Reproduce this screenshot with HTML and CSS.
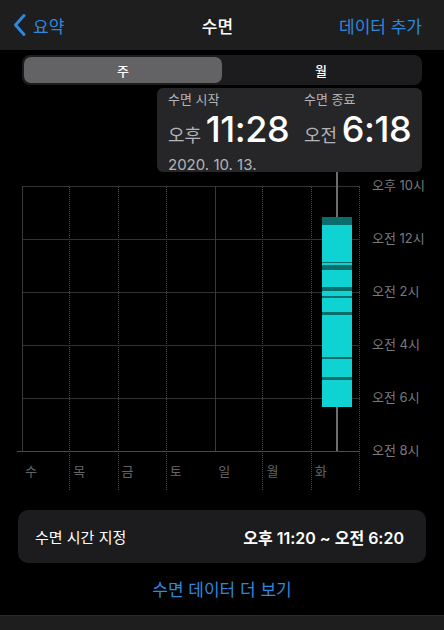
FILE: index.html
```html
<!DOCTYPE html>
<html lang="ko">
<head>
    <meta charset="UTF-8">
    <meta name="viewport" content="width=device-width, initial-scale=1.0">
    <title>수면</title>
    <link rel="stylesheet" href="styles.css">
</head>
<body>
    <header class="navbar">
        <a class="nav-back" href="#">
            <svg width="14" height="24" viewBox="0 0 14 24">
                <path d="M11 2.5 L2.5 12 L11 21.5" fill="none" stroke="currentColor" stroke-width="3" stroke-linecap="round" stroke-linejoin="round"/>
            </svg>
            <span>요약</span>
        </a>
        <div class="nav-title">수면</div>
        <a class="nav-action" href="#">데이터 추가</a>
    </header>

    <div class="segment">
        <div class="segment-item active">주</div>
        <div class="segment-item">월</div>
    </div>

    <div class="tooltip">
        <div class="tip-col">
            <div class="tip-label">수면 시작</div>
            <div class="tip-time"><span class="tip-ampm">오후</span> <span class="tip-big">11:28</span></div>
            <div class="tip-date">2020. 10. 13.</div>
        </div>
        <div class="tip-col">
            <div class="tip-label">수면 종료</div>
            <div class="tip-time"><span class="tip-ampm">오전</span> <span class="tip-big">6:18</span></div>
        </div>
    </div>

    <div class="chart">
        <div class="plot">
            <div class="cols">
                <div class="col">수</div>
                <div class="col">목</div>
                <div class="col">금</div>
                <div class="col mid">토</div>
                <div class="col">일</div>
                <div class="col">월</div>
                <div class="col">화</div>
            </div>
            <div class="rows">
                <div class="row"></div>
                <div class="row"></div>
                <div class="row"></div>
                <div class="row"></div>
                <div class="row"></div>
            </div>
            <!-- sleep bar for 화 -->
            <div class="whisker whisker-top"></div>
            <div class="sleep-bar"></div>
            <div class="whisker whisker-bottom"></div>
        </div>
        <div class="axis">
            <div class="axis-label">오후 10시</div>
            <div class="axis-label">오전 12시</div>
            <div class="axis-label">오전 2시</div>
            <div class="axis-label">오전 4시</div>
            <div class="axis-label">오전 6시</div>
            <div class="axis-label">오전 8시</div>
        </div>
    </div>

    <div class="schedule">
        <span>수면 시간 지정</span>
        <span class="schedule-time">오후 11:20 ~ 오전 6:20</span>
    </div>

    <a class="more-link" href="#">수면 데이터 더 보기</a>

    <div class="tabbar"></div>
</body>
</html>
```

FILE: styles.css
```css
body {
    margin: 0;
    width: 444px;
    height: 630px;
    display: flex;
    flex-direction: column;
    background-color: #000;
    color: #fff;
    font-family: Inter, "Noto Sans CJK KR", sans-serif;
    overflow: hidden;
}

a {
    text-decoration: none;
    color: #2d88de;
}

/* top navigation */
.navbar {
    height: 50px;
    flex-shrink: 0;
    display: grid;
    grid-template-columns: 1fr auto 1fr;
    align-items: center;
    padding: 0 22px 0 13px;
    background-color: #1e1e1f;
    font-size: 17px;
}

.nav-back {
    display: flex;
    align-items: center;
    gap: 6px;
}

.nav-title {
    font-weight: 500;
}

.nav-action {
    justify-self: end;
}

/* week / month switch */
.segment {
    display: flex;
    margin: 5px 22px 0 22px;
    padding: 2px;
    height: 26px;
    border-radius: 8px;
    background-color: #1c1c1e;
}

.segment-item {
    flex: 1;
    display: flex;
    align-items: center;
    justify-content: center;
    font-size: 13px;
    font-weight: 500;
    border-radius: 7px;
}

.segment-item.active {
    background-color: #636366;
}

/* selected day details */
.tooltip {
    display: flex;
    margin: 3px 22px 0 157px;
    height: 84px;
    box-sizing: border-box;
    padding: 2px 0 0 11px;
    border-radius: 6px;
    background-color: #262628;
}

.tip-col:first-child {
    width: 136px;
}

.tip-label {
    font-size: 13px;
    line-height: 18px;
    color: #b4b4b8;
}

.tip-time {
    line-height: 42px;
    white-space: nowrap;
}

.tip-ampm {
    font-size: 18px;
    color: #b4b4b8;
}

.tip-big {
    font-size: 36px;
    font-weight: 500;
    letter-spacing: -0.4px;
}

.tip-date {
    font-size: 15px;
    line-height: 16px;
    color: #b4b4b8;
}

/* chart */
.chart {
    display: flex;
    margin-top: 14px;
    height: 304px;
    flex-shrink: 0;
}

.plot {
    position: relative;
    width: 338px;
    margin-left: 22px;
}

.cols {
    display: grid;
    grid-template-columns: repeat(7, 1fr);
    height: 100%;
}

.col {
    display: flex;
    align-items: flex-end;
    padding: 0 0 10px 3px;
    border-right: 1px dotted #4a4a4a;
    font-size: 13px;
    line-height: 18px;
    color: #646464;
}

.col.mid {
    border-right-color: transparent;
}

.rows {
    position: absolute;
    top: 0;
    left: 0;
    width: 100%;
    height: 266px;
    border-left: 1px solid #3a3a3a;
    border-bottom: 1px solid #4a4a4a;
    box-sizing: border-box;
}

.rows::before {
    content: "";
    position: absolute;
    left: -6px;
    bottom: -1px;
    width: 6px;
    border-bottom: 1px solid #4a4a4a;
}

.rows::after {
    content: "";
    position: absolute;
    top: 0;
    bottom: 0;
    left: 192px;
    border-left: 1px solid #3a3a3a;
}

.row {
    height: 53px;
    border-top: 1px solid #333;
    box-sizing: border-box;
}

.sleep-bar {
    position: absolute;
    left: 300px;
    top: 31px;
    width: 30px;
    height: 190px;
    background: linear-gradient(to bottom,
        #0b6c6c 0 8px, #0fd3d3 8px 45px,
        #0b6c6c 45px 46px, #0fd3d3 46px 48px,
        #0b6c6c 48px 53px, #0fd3d3 53px 70px,
        #0b6c6c 70px 74px, #0fd3d3 74px 79px,
        #0b6c6c 79px 81px, #0fd3d3 81px 95px,
        #0b6c6c 95px 98px, #0fd3d3 98px 140px,
        #0b6c6c 140px 142px, #0fd3d3 142px 160px,
        #0b6c6c 160px 163px, #0fd3d3 163px 190px);
}

.whisker {
    position: absolute;
    left: 314px;
    width: 2px;
    background-color: #6e6e6e;
}

.whisker-top {
    top: -14px;
    height: 45px;
}

.whisker-bottom {
    top: 221px;
    height: 44px;
}

.axis {
    margin: -27px 0 0 12px;
}

.axis-label {
    height: 53px;
    line-height: 53px;
    font-size: 13px;
    color: #7a7a7c;
    white-space: nowrap;
}

/* sleep schedule */
.schedule {
    display: flex;
    justify-content: space-between;
    align-items: center;
    margin: 20px 18px 0 18px;
    height: 53px;
    padding: 0 22px 0 17px;
    border-radius: 10px;
    background-color: #1c1c1e;
    font-size: 15px;
}

.schedule-time {
    font-size: 16px;
    font-weight: 600;
}

.more-link {
    margin-top: 16px;
    text-align: center;
    font-size: 17px;
    line-height: 22px;
}

.tabbar {
    margin-top: auto;
    height: 14px;
    background-color: #1e1e1f;
    border-top: 1px solid #2a2a2a;
}
```
